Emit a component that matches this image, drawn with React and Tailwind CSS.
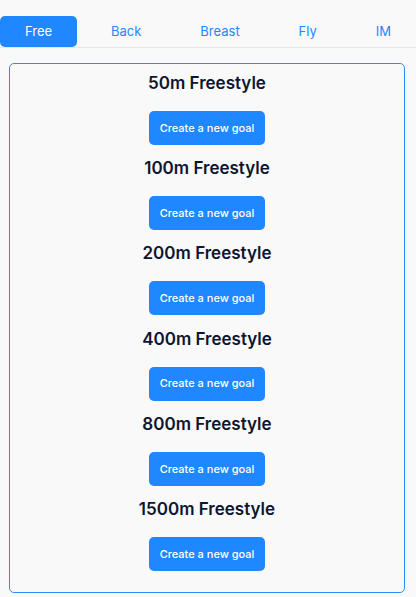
export default function App() {
  const tabs = ["Free", "Back", "Breast", "Fly", "IM"];
  const events = ["50m", "100m", "200m", "400m", "800m", "1500m"];
  return (
    <div className="min-h-[597px] w-[416px] bg-[#f9f9f9]" style={{ fontFamily: "Inter, 'Noto Sans', sans-serif" }}>
      <div className="pt-4">
        <div className="flex justify-between border-b border-[#e8e8e8]">
          {tabs.map((t, i) => (
            <div
              key={t}
              className={
                i === 0
                  ? "h-[31px] px-[25px] flex items-center rounded-[5px] bg-[#1f87ff] text-white text-[13px]"
                  : "h-[31px] px-[25px] flex items-center text-[#1f87ff] text-[13px]"
              }
            >
              {t}
            </div>
          ))}
        </div>
      </div>
      <div className="ml-[9px] mr-[11px] mt-[15px] border border-[#2b8cff] rounded-[5px] pt-[5px] pb-[21px] flex flex-col items-center">
        {events.map((e, i) => (
          <div key={e} className={i === 0 ? "flex flex-col items-center" : "flex flex-col items-center mt-[9.2px]"}>
            <div className="h-[28px] leading-[28px] text-[17px] font-semibold text-[#0d1530]">{e} Freestyle</div>
            <button className="mt-[14px] h-[34px] w-[116px] rounded-[5px] bg-[#1f87ff] text-white text-[11px] font-medium">
              Create a new goal
            </button>
          </div>
        ))}
      </div>
    </div>
  );
}
